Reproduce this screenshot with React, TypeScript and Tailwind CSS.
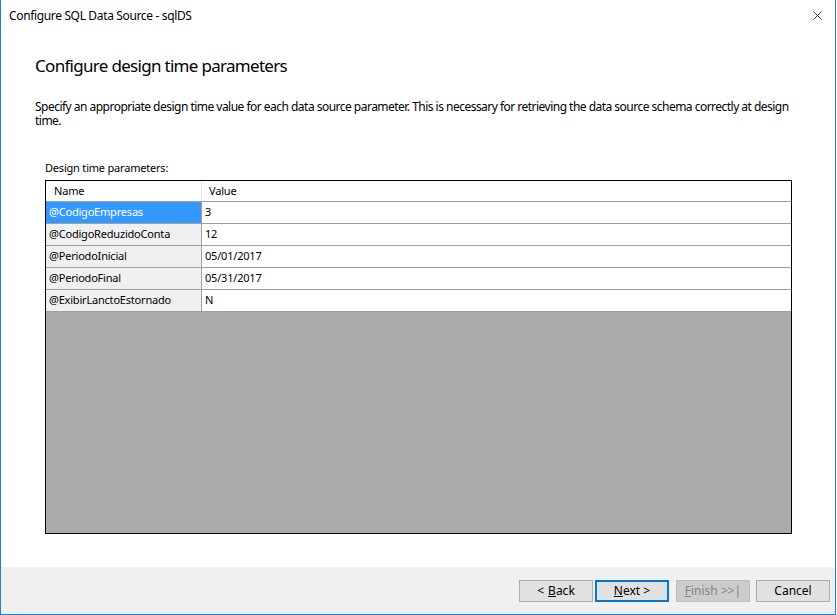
import { X } from "lucide-react";

const params = [
  { name: "@CodigoEmpresas", value: "3" },
  { name: "@CodigoReduzidoConta", value: "12" },
  { name: "@PeriodoInicial", value: "05/01/2017" },
  { name: "@PeriodoFinal", value: "05/31/2017" },
  { name: "@ExibirLanctoEstornado", value: "N" },
];

function Btn({
  children,
  primary,
  disabled,
  className = "",
}: {
  children: React.ReactNode;
  primary?: boolean;
  disabled?: boolean;
  className?: string;
}) {
  return (
    <button
      className={
        "flex h-[22px] w-[74px] items-center justify-center text-[12px] " +
        className +
        " " +
        (primary
          ? "border-2 border-[#0078d7] bg-[#e1e1e1] text-black"
          : disabled
            ? "border border-[#bfbfbf] bg-[#cccccc] text-[#838383]"
            : "border border-[#adadad] bg-[#e1e1e1] text-black")
      }
    >
      {children}
    </button>
  );
}

export default function App() {
  return (
    <div
      className="flex h-[615px] w-[836px] flex-col border-x border-b border-[#1883d7] bg-white text-black"
      style={{ fontFamily: '"Noto Sans", "Open Sans", sans-serif' }}
    >
      {/* title bar */}
      <div className="flex h-[31px] shrink-0 items-center justify-between pl-[8px] pr-[10px]">
        <span className="text-[12px] tracking-[-0.35px]">Configure SQL Data Source - sqlDS</span>
        <X className="h-[15px] w-[15px]" strokeWidth={1.2} />
      </div>

      {/* content */}
      <div className="flex flex-1 flex-col px-[34px] pt-[24px]">
        <h1 className="text-[17px] leading-[22px] tracking-[-0.7px]">Configure design time parameters</h1>
        <p className="mt-[23px] mr-[-4px] text-[12px] leading-[14px] tracking-[-0.52px]">
          Specify an appropriate design time value for each data source parameter. This is necessary
          for retrieving the data source schema correctly at design time.
        </p>

        <div className="mt-[33px] flex flex-col pl-[10px] pr-[9px]">
          <span className="text-[11px] leading-[14px] tracking-[-0.2px]">Design time parameters:</span>
          <div className="mt-[5px] flex h-[354px] flex-col border border-black bg-[#ababab]">
            <div className="flex h-[21px] shrink-0 border-b border-[#a0a0a0] bg-white text-[11px] tracking-[-0.2px]">
              <div className="flex w-[156px] items-center border-r border-[#e5e5e5] pl-[8px]">Name</div>
              <div className="flex flex-1 items-center pl-[7px]">Value</div>
            </div>
            {params.map((p, i) => (
              <div
                key={p.name}
                className="flex h-[22px] shrink-0 border-b border-[#a0a0a0] text-[11px] tracking-[-0.2px]"
              >
                <div
                  className={
                    "flex w-[156px] items-center border-r border-[#a0a0a0] pl-[3px] " +
                    (i === 0 ? "bg-[#3399ff] text-white" : "bg-[#f0f0f0]")
                  }
                >
                  {p.name}
                </div>
                <div className="flex flex-1 items-center bg-white pl-[3px]">{p.value}</div>
              </div>
            ))}
          </div>
        </div>
      </div>

      {/* footer */}
      <div className="flex h-[47px] shrink-0 items-center justify-end bg-[#f0f0f0] pr-[5px] pt-[1px]">
        <Btn>
          &lt;<span className="ml-[4px] underline">B</span>ack
        </Btn>
        <Btn primary className="ml-[2px]">
          <span className="underline">N</span>ext &gt;
        </Btn>
        <Btn disabled className="ml-[7px]">
          <span className="underline">F</span>inish &gt;&gt;|
        </Btn>
        <Btn className="ml-[6px]">Cancel</Btn>
      </div>
    </div>
  );
}
